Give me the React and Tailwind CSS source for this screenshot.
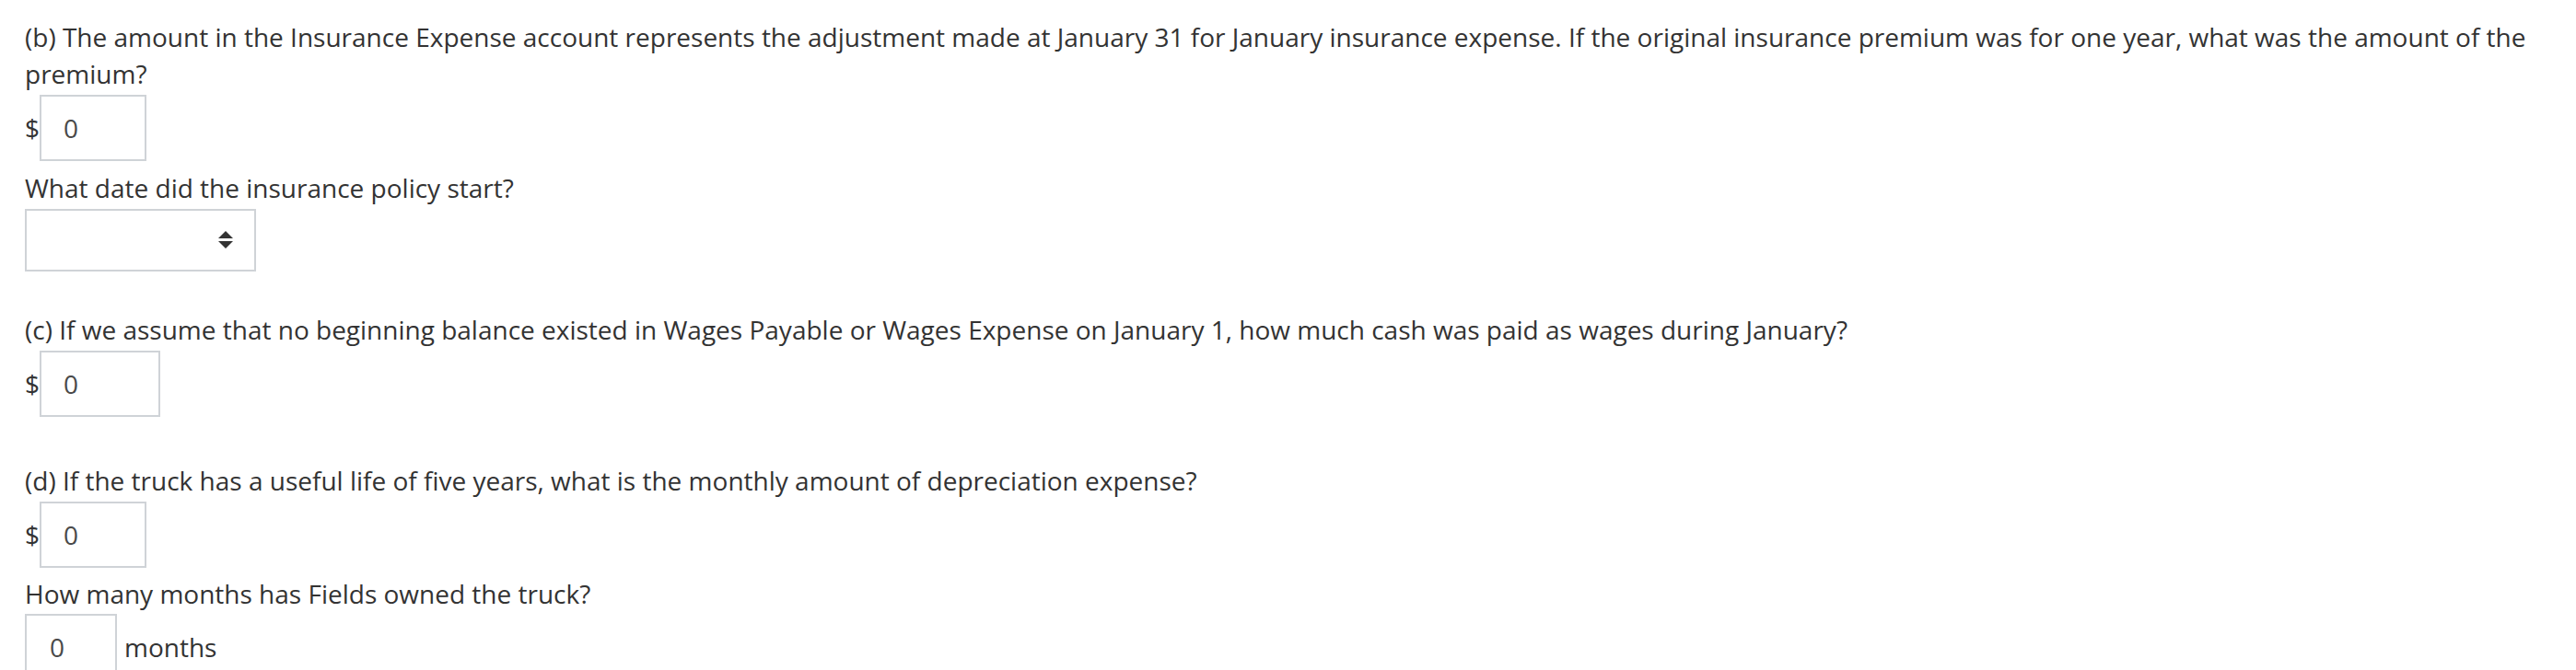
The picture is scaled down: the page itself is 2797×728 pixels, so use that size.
import React from 'react';

function AmountInput({ width }) {
  return (
    <div className="flex items-center mt-[3px]">
      <span className="w-[16px]">$</span>
      <div className={`h-[72px] border-2 border-[#cfd3d7] flex items-center pl-[24px] text-[#4a4a4a] ${width}`}>0</div>
    </div>
  );
}

export default function App() {
  return (
    <div className="bg-white min-h-screen px-[27px] pt-[20px] text-[28px] leading-[40px] text-[#333]" style={{ fontFamily: '"Open Sans", sans-serif' }}>
      {/* (b) insurance */}
      <p>
        (b) The amount in the Insurance Expense account represents the adjustment made at January 31 for January insurance expense. If the original insurance premium was for one year, what was the amount of the premium?
      </p>
      <AmountInput width="w-[116px]" />
      <p className="mt-[9px]">What date did the insurance policy start?</p>
      <div className="mt-[3px] w-[251px] h-[68px] border-2 border-[#cfd3d7] flex items-center justify-end pr-[23px]">
        <svg width="16" height="20" viewBox="0 0 16 20" className="text-[#333]">
          <path d="M8 0 L16 8 L0 8 Z" fill="currentColor" />
          <path d="M0 11 L16 11 L8 19 Z" fill="currentColor" />
        </svg>
      </div>

      {/* (c) wages */}
      <p className="mt-[43px]">
        (c) If we assume that no beginning balance existed in Wages Payable or Wages Expense on January 1, how much cash was paid as wages during January?
      </p>
      <AmountInput width="w-[131px]" />

      {/* (d) truck */}
      <p className="mt-[49px]">
        (d) If the truck has a useful life of five years, what is the monthly amount of depreciation expense?
      </p>
      <AmountInput width="w-[116px]" />
      <p className="mt-[8px]">How many months has Fields owned the truck?</p>
      <div className="flex items-center mt-[2px]">
        <div className="w-[100px] h-[72px] border-2 border-[#cfd3d7] flex items-center pl-[25px] text-[#4a4a4a]">0</div>
        <span className="ml-[8px]">months</span>
      </div>
    </div>
  );
}
